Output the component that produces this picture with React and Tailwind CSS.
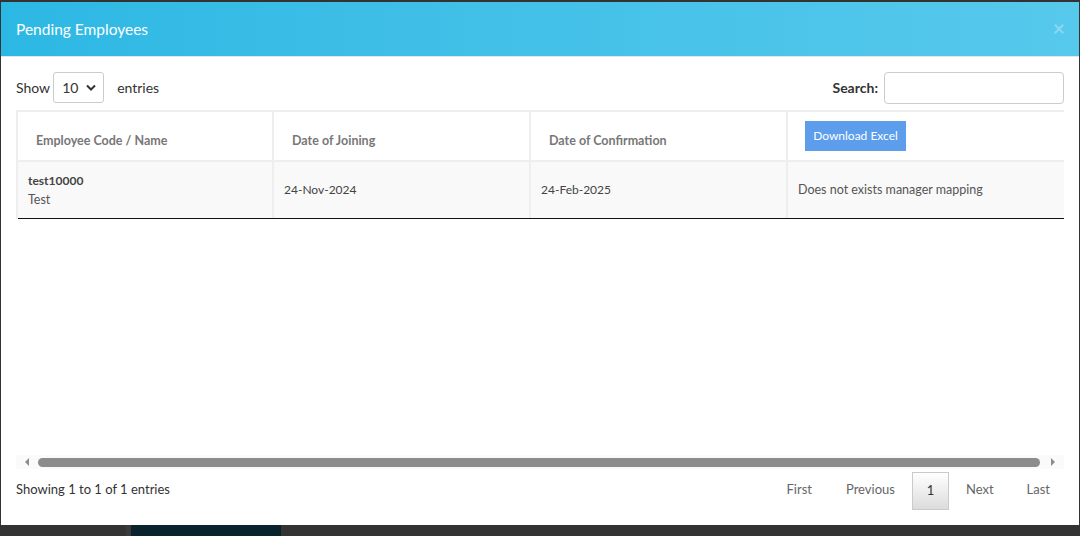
import React from "react";

const font = { fontFamily: "Lato, 'Noto Sans', sans-serif" };

export default function App() {
  return (
    <div className="w-[1080px] h-[536px] bg-[#333333] overflow-hidden flex flex-col text-[#333]" style={font}>
      <div className="h-[2px] shrink-0" />
      <div className="mx-[1px] h-[523px] bg-white flex flex-col shrink-0">
        {/* header */}
        <div className="h-[55px] shrink-0 bg-gradient-to-r from-[#2cb8e4] to-[#56c9ec] border-b border-[#e5e5e5] flex items-center justify-between pl-[15px] pr-[14px]">
          <span className="text-white text-[15.5px] leading-none mt-[1px]">Pending Employees</span>
          <span className="text-[#8ad8f3] text-[21px] font-bold leading-none -mt-[3px]">×</span>
        </div>
        {/* body */}
        <div className="flex-1 flex flex-col px-[15px] pt-[15px] pb-[15px]">
          <div className="flex items-center justify-between h-[31px]">
            <div className="flex items-center text-[14px] text-[#333]">
              <span>Show</span>
              <div className="ml-[3px] w-[51px] h-[31px] border border-[#cccccc] rounded-[3px] flex items-center justify-between pl-[8px] pr-[7px] text-[14px]">
                <span>10</span>
                <svg width="10" height="7" viewBox="0 0 10 7"><path d="M1 1.5 L5 5.5 L9 1.5" stroke="#333" strokeWidth="2" fill="none" /></svg>
              </div>
              <span className="ml-[13px]">entries</span>
            </div>
            <div className="flex items-center text-[14px]">
              <span className="font-bold">Search:</span>
              <div className="ml-[6px] w-[180px] h-[32px] border border-[#cccccc] rounded-[4px]" />
            </div>
          </div>
          {/* table */}
          <div className="mt-[7px] overflow-hidden">
            <div className="w-[1200px] border-t-2 border-l-2 border-[#eeeeee]">
              <div className="flex h-[50px] border-b-2 border-[#eeeeee] bg-white">
                <div className="w-[256px] border-r-2 border-[#eeeeee] flex items-end pb-[9px] pl-[18px] text-[12.5px] font-bold text-[#777]">Employee Code / Name</div>
                <div className="w-[257px] border-r-2 border-[#eeeeee] flex items-end pb-[9px] pl-[18px] text-[12.5px] font-bold text-[#777]">Date of Joining</div>
                <div className="w-[257px] border-r-2 border-[#eeeeee] flex items-end pb-[9px] pl-[18px] text-[12.5px] font-bold text-[#777]">Date of Confirmation</div>
                <div className="flex-1 flex items-start pt-[9px] pl-[17px]">
                  <div className="w-[101px] h-[30px] bg-[#5c9dec] text-white text-[12px] flex items-center justify-center">Download Excel</div>
                </div>
              </div>
              <div className="flex h-[57px] bg-[#f9f9f9] border-b-[1.5px] border-[#111]">
                <div className="w-[256px] border-r-2 border-[#eeeeee] flex flex-col justify-center pl-[10px] leading-[19px] text-[#444]">
                  <span className="font-bold text-[12px]">test10000</span>
                  <span className="text-[#555] text-[12.5px]">Test</span>
                </div>
                <div className="w-[257px] border-r-2 border-[#eeeeee] flex items-center pl-[10px] text-[12px] text-[#444]">24-Nov-2024</div>
                <div className="w-[257px] border-r-2 border-[#eeeeee] flex items-center pl-[10px] text-[12px] text-[#444]">24-Feb-2025</div>
                <div className="flex-1 flex items-center pl-[10px] text-[12.5px] text-[#555]">Does not exists manager mapping</div>
              </div>
            </div>
          </div>
          <div className="flex-1" />
          {/* scrollbar */}
          <div className="h-[14px] bg-[#fafafa] flex items-center">
            <svg width="22" height="14" viewBox="0 0 22 14" className="shrink-0"><path d="M13 3 L9 7 L13 11 Z" fill="#8c8c8c" /></svg>
            <div className="flex-1 h-[9px] rounded-full bg-[#8c8c8c]" />
            <svg width="24" height="14" viewBox="0 0 24 14" className="shrink-0"><path d="M11 3 L15 7 L11 11 Z" fill="#8c8c8c" /></svg>
          </div>
          <div className="flex items-center justify-between mt-[3px]">
            <span className="text-[13px] text-[#333] -mt-[3px]">Showing 1 to 1 of 1 entries</span>
            <div className="flex items-center text-[13px] text-[#666]">
              <span className="px-[17px] -mt-[3px]">First</span>
              <span className="px-[17px] -mt-[3px]">Previous</span>
              <span className="w-[37px] h-[38px] border border-[#cacaca] bg-gradient-to-b from-white to-[#dcdcdc] flex items-center justify-center text-[#333]">1</span>
              <span className="px-[17px] -mt-[3px]">Next</span>
              <span className="pl-[16px] pr-[14px] -mt-[3px]">Last</span>
            </div>
          </div>
        </div>
      </div>
      <div className="flex flex-1">
        <div className="w-[126px]" />
        <div className="w-[5px] bg-[#3a3a3a]" />
        <div className="w-[150px] bg-[#0a222c]" />
      </div>
    </div>
  );
}
